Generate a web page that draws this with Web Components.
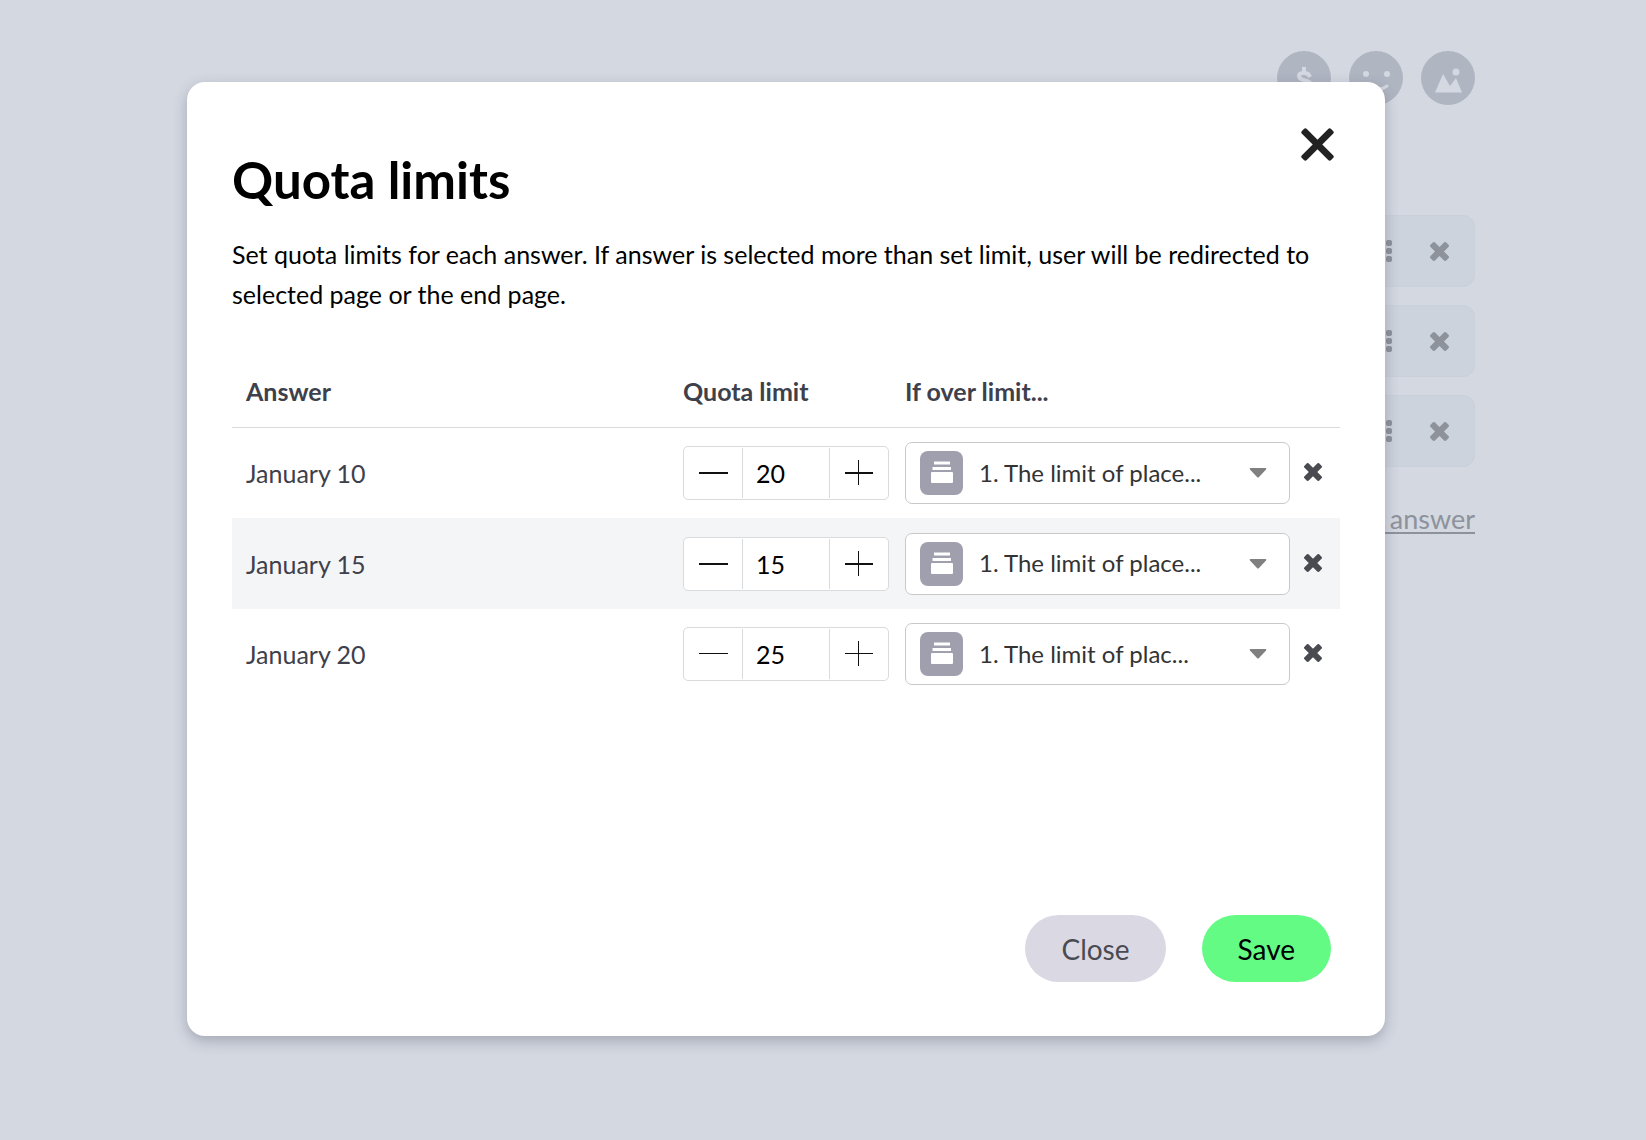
<!DOCTYPE html>
<html lang="en">
<head>
<meta charset="utf-8">
<meta name="viewport" content="width=device-width, initial-scale=1">
<title>Quota limits</title>
<style>
    body {
        margin: 0;
        min-height: 100vh;
        background-color: #d3d8e1;
        color: #3e404b;
        font-family: Lato, "Open Sans", sans-serif;
        font-size: 25px;
    }
</style>
</head>
<body>
<survey-page></survey-page>
<quota-modal heading="Quota limits">
    Set quota limits for each answer. If answer is selected more than set limit, user will be redirected to selected page or the end page.
    <quota-table slot="content"></quota-table>
    <pill-button slot="actions">Close</pill-button>
    <pill-button slot="actions" primary>Save</pill-button>
</quota-modal>

<script>
// Helper: open a shadow root and fill it from a template
function render(element, html) {
    const template = document.createElement("template");
    template.innerHTML = html;
    element.attachShadow({ mode: "open" });
    element.shadowRoot.appendChild(template.content.cloneNode(true));
}

// Cross icon, "thin" gives the longer and slimmer arms
class CrossIcon extends HTMLElement {
    constructor() {
        super();
        const thin = this.hasAttribute("thin");
        const rect = thin
            ? `<rect x="-15" y="-2.500" width="30" height="5" rx="1.500"/>`
            : `<rect x="-14" y="-4" width="28" height="8" rx="2"/>`;
        render(this, `
            <style>
                :host { display: block; }
                svg { display: block; width: 100%; height: 100%; fill: currentColor; }
            </style>
            <svg viewBox="-12 -12 24 24" aria-hidden="true">
                <g transform="rotate(45)">${rect}</g>
                <g transform="rotate(-45)">${rect}</g>
            </svg>
        `);
    }
}
customElements.define("cross-icon", CrossIcon);

// One answer bar of the survey editor
class AnswerBar extends HTMLElement {
    constructor() {
        super();
        render(this, `
            <style>
                :host {
                    display: flex;
                    align-items: center;
                    justify-content: flex-end;
                    gap: 38px;
                    box-sizing: border-box;
                    height: 72px;
                    padding-right: 25px;
                    border: 1px solid #cad0d9;
                    border-radius: 12px;
                    background-color: #cdd3dc;
                    color: #8d929b;
                }
                button { padding: 0; border: 0; background: none; color: inherit; }
                svg { display: block; fill: currentColor; }
                cross-icon { width: 19px; height: 19px; }
            </style>
            <svg width="14" height="22" viewBox="0 0 14 22" aria-hidden="true">
                <rect x="0" y="0" width="6" height="6" rx="2"/><rect x="8" y="0" width="6" height="6" rx="2"/>
                <rect x="0" y="8" width="6" height="6" rx="2"/><rect x="8" y="8" width="6" height="6" rx="2"/>
                <rect x="0" y="16" width="6" height="6" rx="2"/><rect x="8" y="16" width="6" height="6" rx="2"/>
            </svg>
            <button type="button" aria-label="Remove"><cross-icon></cross-icon></button>
        `);
    }
}
customElements.define("answer-bar", AnswerBar);

// The survey editor that stays dimmed behind the modal
class SurveyPage extends HTMLElement {
    constructor() {
        super();
        render(this, `
            <style>
                :host {
                    display: block;
                    padding: 51px 171px 0 240px;
                    color: #8d929b;
                }
                .tools {
                    display: flex;
                    justify-content: flex-end;
                    gap: 18px;
                    margin-bottom: 110px;
                }
                .tools button {
                    width: 54px;
                    height: 54px;
                    padding: 0;
                    border: 0;
                    border-radius: 50%;
                    background-color: #b0b5c2;
                }
                svg { display: block; width: 54px; height: 54px; }
                .answers { display: grid; gap: 18px; }
                .add { margin-top: 34px; text-align: right; font-size: 27px; line-height: 36px; }
                a { color: inherit; text-decoration-thickness: 2px; text-underline-offset: 3px; }
            </style>
            <div class="tools">
                <button type="button" aria-label="Price">
                    <svg viewBox="0 0 54 54" fill="none" stroke="#d3d8e1" stroke-width="4">
                        <path d="M33 26c-1-3-3-4-6-4-3 0-5 1-5 3 0 6 12 3 12 9 0 3-3 4-7 4-3 0-6-1-7-4M27 16v6M27 38v4"/>
                    </svg>
                </button>
                <button type="button" aria-label="Emoji">
                    <svg viewBox="0 0 54 54" fill="#d3d8e1">
                        <circle cx="17" cy="23" r="3"/><circle cx="38" cy="23" r="3"/>
                        <path d="M17 34q12 8 21 1" fill="none" stroke="#d3d8e1" stroke-width="3" stroke-linecap="round"/>
                    </svg>
                </button>
                <button type="button" aria-label="Picture">
                    <svg viewBox="0 0 54 54" fill="#d3d8e1">
                        <path d="M14 41.500 22 23l7 12 6-8 6 14.500z"/><circle cx="35" cy="21" r="3.500"/>
                    </svg>
                </button>
            </div>
            <div class="answers">
                <answer-bar></answer-bar>
                <answer-bar></answer-bar>
                <answer-bar></answer-bar>
            </div>
            <div class="add"><a href="#">&nbsp;&nbsp;answer</a></div>
        `);
    }
}
customElements.define("survey-page", SurveyPage);

// Number box with minus and plus buttons
class NumberStepper extends HTMLElement {
    constructor() {
        super();
        const bar = this.hasAttribute("fine") ? 1 : 2;
        render(this, `
            <style>
                :host {
                    display: flex;
                    box-sizing: border-box;
                    width: 206px;
                    height: 54px;
                    padding: 1px 0;
                    border: 1px solid #d9dadb;
                    border-radius: 5px;
                    background-color: #fff;
                }
                button {
                    flex: 0 0 58px;
                    display: grid;
                    place-items: center;
                    padding: 0;
                    border: 0;
                    background: none;
                    color: #111;
                }
                input {
                    box-sizing: border-box;
                    flex: 1;
                    min-width: 0;
                    padding: 0 13px;
                    border: 0;
                    border-left: 1px solid #d9dadb;
                    border-right: 1px solid #d9dadb;
                    background: none;
                    color: #000;
                    font: inherit;
                }
                svg { display: block; fill: currentColor; }
            </style>
            <button type="button" class="minus" aria-label="Decrease">
                <svg width="30" height="26"><rect x="1" y="12" width="29" height="${bar}"/></svg>
            </button>
            <input type="text" inputmode="numeric" aria-label="${this.getAttribute("label")}" value="${this.getAttribute("value")}">
            <button type="button" class="plus" aria-label="Increase">
                <svg width="28" height="26"><rect x="0" y="12" width="28" height="${bar}"/><rect x="13" y="0" width="1" height="25"/></svg>
            </button>
        `);

        // Step the value with the buttons
        const input = this.shadowRoot.querySelector("input");
        const step = (amount) => { input.value = Math.max(0, Number(input.value) + amount); };
        this.shadowRoot.querySelector(".minus").addEventListener("click", () => step(-1));
        this.shadowRoot.querySelector(".plus").addEventListener("click", () => step(1));
    }
}
customElements.define("number-stepper", NumberStepper);

// Drop-down with the page icon in front of its text
class PageSelect extends HTMLElement {
    constructor() {
        super();
        render(this, `
            <style>
                :host { display: grid; align-items: center; }
                select, svg { grid-area: 1 / 1; }
                select {
                    appearance: none;
                    box-sizing: border-box;
                    width: 100%;
                    height: 62px;
                    padding: 0 48px 2px 73px;
                    border: 1px solid #c8c9ca;
                    border-radius: 7px;
                    background-color: #fff;
                    color: #333;
                    font: inherit;
                    font-size: 24px;
                }
                svg { pointer-events: none; }
                .page { margin-left: 15px; }
                .arrow { justify-self: end; margin-right: 23px; }
            </style>
            <select aria-label="${this.getAttribute("label")}">
                <option>${this.getAttribute("value")}</option>
            </select>
            <svg class="page" width="43" height="44" viewBox="0 0 43 44" aria-hidden="true">
                <rect width="43" height="44" rx="8" fill="#a09fae"/>
                <path d="M14 10.500h16v3H14zM12.500 16h18.500v3H12.500zM11 22q0-1 1-1h20q1 0 1 1v9q0 1-1 1H12q-1 0-1-1z" fill="#fff"/>
            </svg>
            <svg class="arrow" width="18" height="10" viewBox="0 0 18 10" aria-hidden="true">
                <path d="M1.500 0h15q1.500 0 .5 1.500l-7 7.500q-1 1-2 0L1 1.500Q0 0 1.500 0z" fill="#808080"/>
            </svg>
        `);
    }
}
customElements.define("page-select", PageSelect);

// Table with one row for each answer
class QuotaTable extends HTMLElement {
    constructor() {
        super();
        const rows = [
            { answer: "January 10", limit: 20, page: "1. The limit of place..." },
            { answer: "January 15", limit: 15, page: "1. The limit of place..." },
            { answer: "January 20", limit: 25, page: "1. The limit of plac...", fine: true },
        ];
        render(this, `
            <style>
                :host { display: block; }
                table { width: 100%; table-layout: fixed; border-collapse: separate; border-spacing: 0; }
                th, td { box-sizing: border-box; padding: 0 0 0 14px; text-align: left; }
                th { height: 73px; border-bottom: 1px solid #d9dadb; font-weight: 700; }
                td { height: 90px; }
                tbody tr:nth-child(even) td { height: 91px; background-color: #f4f5f7; }
                .limit { width: 222px; }
                .page { width: 399px; }
                .remove { width: 50px; }
                button { display: block; padding: 0 0 2px; border: 0; background: none; color: #494b50; }
                cross-icon { width: 18px; height: 18px; }
            </style>
            <table>
                <thead>
                    <tr>
                        <th>Answer</th>
                        <th class="limit">Quota limit</th>
                        <th class="page">If over limit...</th>
                        <th class="remove"></th>
                    </tr>
                </thead>
                <tbody>
                    ${rows.map((row) => `
                        <tr>
                            <td>${row.answer}</td>
                            <td><number-stepper label="Quota limit, ${row.answer}" value="${row.limit}" ${row.fine ? "fine" : ""}></number-stepper></td>
                            <td><page-select label="If over limit, ${row.answer}" value="${row.page}"></page-select></td>
                            <td><button type="button" aria-label="Remove ${row.answer}"><cross-icon></cross-icon></button></td>
                        </tr>
                    `).join("")}
                </tbody>
            </table>
        `);
    }
}
customElements.define("quota-table", QuotaTable);

// Rounded action button
class PillButton extends HTMLElement {
    constructor() {
        super();
        render(this, `
            <style>
                :host { display: block; }
                button {
                    display: block;
                    height: 67px;
                    padding: 0 36px;
                    border: 0;
                    border-radius: 34px;
                    background-color: #dad9e3;
                    color: #4a4a52;
                    font: inherit;
                    font-size: 28px;
                }
                :host([primary]) button { background-color: #63fb84; color: #000; }
            </style>
            <button type="button"><slot></slot></button>
        `);
    }
}
customElements.define("pill-button", PillButton);

// The modal itself
class QuotaModal extends HTMLElement {
    constructor() {
        super();
        render(this, `
            <style>
                :host {
                    position: absolute;
                    top: 82px;
                    left: 187px;
                    right: 261px;
                    display: block;
                    box-sizing: border-box;
                    padding: 68px 45px 54px;
                    border-radius: 18px;
                    background-color: #fff;
                    box-shadow: 0 5px 14px rgba(60, 60, 80, 0.3);
                }
                h1 { margin: 0 0 24px; color: #000; font-size: 51px; line-height: 60px; font-weight: 700; }
                p { margin: 0 0 41px; color: #000; line-height: 40px; }
                .close {
                    position: absolute;
                    top: 46px;
                    right: 51px;
                    padding: 0;
                    border: 0;
                    background: none;
                    color: #222;
                }
                cross-icon { width: 33px; height: 33px; }
                .actions {
                    display: flex;
                    justify-content: flex-end;
                    gap: 36px;
                    margin: 216px 9px 0 0;
                }
            </style>
            <button class="close" type="button" aria-label="Close dialog"><cross-icon thin></cross-icon></button>
            <h1>${this.getAttribute("heading")}</h1>
            <p><slot></slot></p>
            <slot name="content"></slot>
            <div class="actions"><slot name="actions"></slot></div>
        `);
        this.setAttribute("role", "dialog");
    }
}
customElements.define("quota-modal", QuotaModal);
</script>
</body>
</html>
